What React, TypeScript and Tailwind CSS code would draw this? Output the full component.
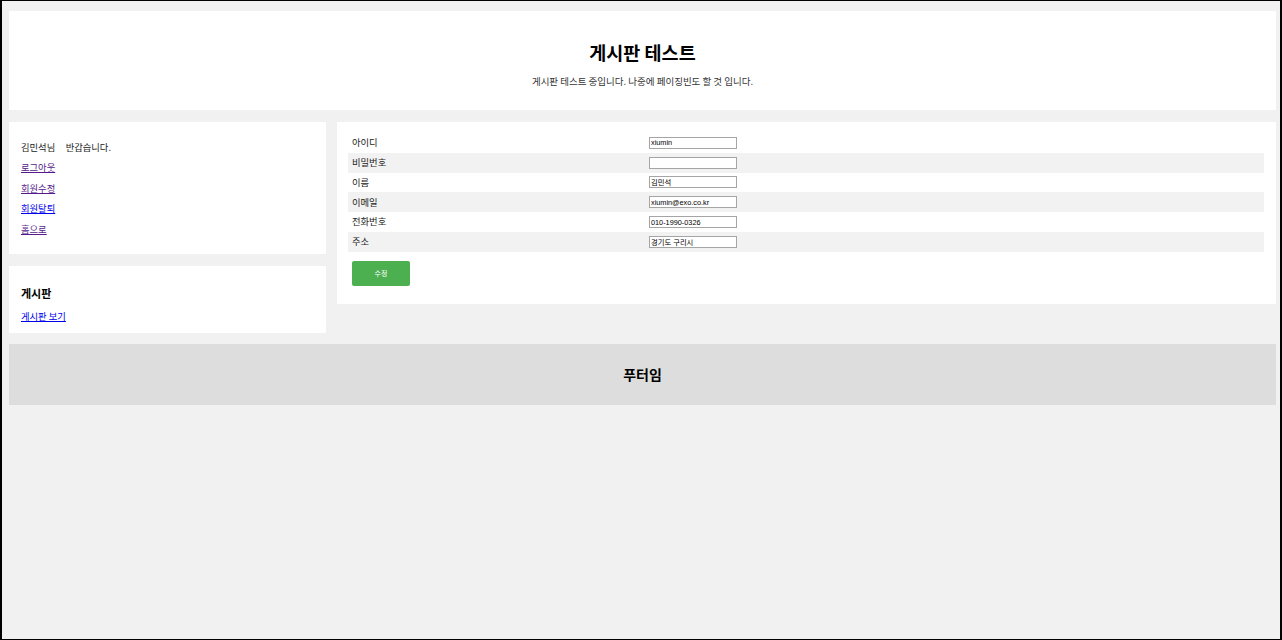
import React from "react";

const fields = [
  { label: "아이디", value: "xiumin" },
  { label: "비밀번호", value: "" },
  { label: "이름", value: "김민석" },
  { label: "이메일", value: "xiumin@exo.co.kr" },
  { label: "전화번호", value: "010-1990-0326" },
  { label: "주소", value: "경기도 구리시" },
];

const menu = [
  { text: "로그아웃", visited: true },
  { text: "회원수정", visited: true },
  { text: "회원탈퇴", visited: false },
  { text: "홈으로", visited: true },
];

export default function App() {
  return (
    <div
      className="w-[1282px] h-[640px] bg-[#f1f1f1] border-black border-l-2 border-r-2 border-t border-b overflow-hidden text-[#222]"
      style={{ fontFamily: '"Noto Sans CJK KR", "Noto Sans", sans-serif' }}
    >
      <div className="pl-[7px] pr-[4px] pt-[10px]">
        {/* header */}
        <div className="h-[99px] bg-white flex flex-col items-center">
          <h1 className="pt-[29px] text-[18.5px] leading-[24px] font-bold text-black">
            게시판 테스트
          </h1>
          <p className="mt-[10px] text-[9.5px] leading-[14px] text-[#333]">
            게시판 테스트 중입니다. 나중에 페이징빈도 할 것 입니다.
          </p>
        </div>

        <div className="mt-[12px] flex gap-[11px] items-start">
          {/* sidebar */}
          <div className="w-[317px] flex flex-col gap-[12px]">
            <div className="bg-white px-3 pt-[15px] pb-[15px] text-[9.3px]">
              <p className="h-[20.4px] leading-[20.4px]">
                김민석님&nbsp;&nbsp;&nbsp;&nbsp;&nbsp;반갑습니다.
              </p>
              {menu.map((m) => (
                <p key={m.text} className="h-[20.4px] leading-[20.4px]">
                  <a
                    href="#"
                    className={
                      m.visited
                        ? "underline text-[#551a8b]"
                        : "underline text-[#0000ee]"
                    }
                  >
                    {m.text}
                  </a>
                </p>
              ))}
            </div>
            <div className="bg-white px-3 pt-[17px] pb-[7px]">
              <h3 className="h-[20px] leading-[20px] text-[11px] font-bold text-black">
                게시판
              </h3>
              <p className="mt-[3px] h-[20px] leading-[20px] text-[9.3px]">
                <a href="#" className="underline text-[#0000ee]">
                  게시판 보기
                </a>
              </p>
            </div>
          </div>

          {/* form */}
          <div className="flex-1 bg-white pt-[11px] pl-[11px] pr-[12px] pb-[18px]">
            <div>
              {fields.map((f, i) => (
                <div
                  key={f.label}
                  className={
                    "h-[19.8px] grid grid-cols-[297px_1fr] items-center " +
                    (i % 2 === 1 ? "bg-[#f2f2f2]" : "bg-white")
                  }
                >
                  <span className="pl-1 text-[9.3px] leading-none">{f.label}</span>
                  <div className="pl-1 flex items-center">
                    <input
                      type={f.label === "비밀번호" ? "password" : "text"}
                      value={f.value}
                      readOnly
                      className="w-[88px] h-[12px] border border-[#a5a5a5] bg-white px-[1px] text-[7.3px] leading-none text-black outline-none"
                      style={{
                        fontFamily:
                          '"Liberation Sans", "Noto Sans CJK KR", sans-serif',
                      }}
                    />
                  </div>
                </div>
              ))}
            </div>
            <button className="mt-[9px] ml-1 w-[58px] h-[25px] rounded-[2px] bg-[#4caf50] text-white text-[7px] leading-none flex items-center justify-center">
              수정
            </button>
          </div>
        </div>

        {/* footer */}
        <div className="mt-[11px] h-[61px] bg-[#dddddd] flex items-center justify-center">
          <h2 className="text-[14px] font-bold text-black leading-none">푸터임</h2>
        </div>
      </div>
    </div>
  );
}
